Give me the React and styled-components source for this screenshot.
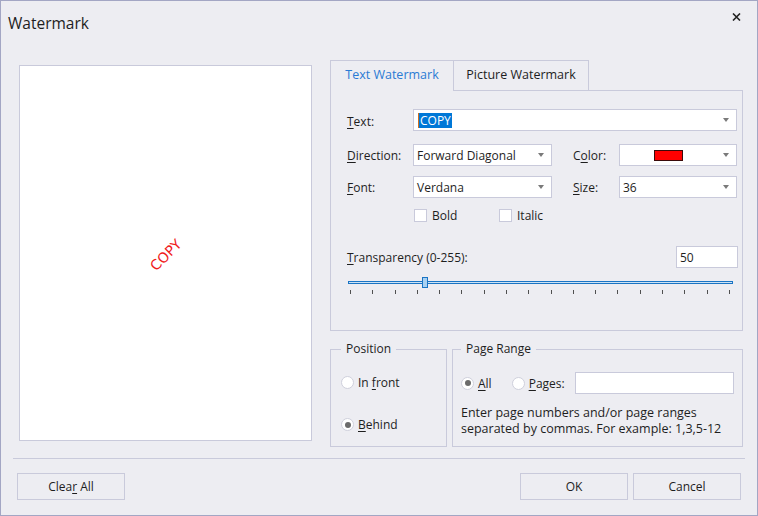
import React from 'react';
import styled, { createGlobalStyle } from 'styled-components';

const GlobalStyle = createGlobalStyle`
  html, body {
    margin: 0;
    padding: 0;
    background: #ededf2;
  }
  * { box-sizing: border-box; }
`;

const LINE = '#c9cadb';
const TEXT = '#1e1e1e';

const Window = styled.div`
  width: 758px;
  height: 516px;
  border: 1px solid #a3a6c4;
  background: #ededf2;
  display: flex;
  flex-direction: column;
  font-family: "Open Sans", "Noto Sans", sans-serif;
  font-size: 12px;
  color: ${TEXT};
`;

const TitleBar = styled.div`
  height: 44px;
  display: flex;
  justify-content: space-between;
  padding: 0 16px 0 7px;
`;

const Title = styled.div`
  align-self: center;
  font-size: 15.5px;
  margin-top: -1px;
`;

const CloseButton = styled.div`
  margin-top: 11px;
  width: 10px;
  height: 10px;
  display: flex;
  align-items: center;
  justify-content: center;
`;

const Main = styled.div`
  display: flex;
  gap: 18px;
  padding: 15px 0 0 18px;
`;

const Preview = styled.div`
  width: 293px;
  height: 376px;
  margin-top: 5px;
  background: #fff;
  border: 1px solid ${LINE};
  display: flex;
  align-items: center;
  justify-content: center;
`;

const PreviewText = styled.span`
  font-family: "DejaVu Sans", Verdana, sans-serif;
  font-size: 14px;
  color: #f01c1c;
  transform: rotate(-45deg);
  margin-top: 4px;
`;

const RightColumn = styled.div`
  width: 413px;
  display: flex;
  flex-direction: column;
`;

const TabStrip = styled.div`
  display: flex;
  height: 30px;
`;

const Tab = styled.div`
  height: ${p => (p.$active ? 31 : 30)}px;
  margin-bottom: ${p => (p.$active ? -1 : 0)}px;
  position: relative;
  z-index: ${p => (p.$active ? 1 : 0)};
  width: ${p => p.$width}px;
  background: #ededf2;
  border: 1px solid ${LINE};
  border-bottom: none;
  border-left: ${p => (p.$active ? `1px solid ${LINE}` : 'none')};
  color: ${p => (p.$active ? '#2b7bd4' : TEXT)};
  font-size: 12.5px;
  display: flex;
  align-items: center;
  justify-content: center;
  padding-bottom: ${p => (p.$active ? 3 : 2)}px;
`;

const TabPanel = styled.div`
  height: 241px;
  border: 1px solid ${LINE};
  padding: 18px 4px 0 16px;
`;

const Row = styled.div`
  display: flex;
  align-items: center;
  justify-content: ${p => (p.$spread ? 'space-between' : 'flex-start')};
  margin-top: ${p => p.$mt || 0}px;
  height: ${p => p.$h || 22}px;
`;

const Label = styled.div`
  width: ${p => p.$w}px;
  flex: none;
  padding-top: ${p => p.$drop || 0}px;
`;

const U = styled.span`
  text-decoration: underline;
  text-underline-offset: 2px;
`;

const Field = styled.div`
  position: relative;
  width: ${p => p.$w}px;
  height: 22px;
  background: #fff;
  border: 1px solid ${LINE};
  display: flex;
  align-items: center;
  padding-left: ${p => p.$pl || 3}px;
  margin-left: ${p => p.$ml || 0}px;
  flex: none;
`;

const Arrow = styled.span`
  position: absolute;
  right: 7px;
  top: 8px;
  width: 0;
  height: 0;
  border-left: 3.5px solid transparent;
  border-right: 3.5px solid transparent;
  border-top: 4px solid #7a7a7a;
`;

const Selected = styled.span`
  background: #0078d7;
  color: #fff;
  padding: 0 1px;
  line-height: 15px;
  border-left: 1px solid #d07020;
`;

const Swatch = styled.span`
  width: 29px;
  height: 11px;
  margin-left: 31px;
  margin-top: 1px;
  background: #ff0000;
  border: 1px solid #3a0a0a;
`;

const Spacer = styled.div`
  width: ${p => p.$w}px;
  flex: none;
`;

const CheckItem = styled.label`
  display: flex;
  align-items: center;
  gap: 5px;
  width: ${p => p.$w}px;
`;

const CheckBox = styled.span`
  width: 13px;
  height: 13px;
  background: #fff;
  border: 1px solid ${LINE};
`;

const SliderWrap = styled.div`
  position: relative;
  margin-top: 9px;
  margin-left: 1px;
  width: 385px;
  height: 18px;
`;

const Track = styled.div`
  position: absolute;
  left: 0;
  right: 0;
  top: 4px;
  height: 3px;
  border: 1px solid #1a74c4;
  background: #cfe4f6;
`;

const Thumb = styled.div`
  position: absolute;
  top: 0;
  width: 6px;
  height: 11px;
  background: #a9d1f2;
  border: 1px solid #1a74c4;
`;

const Ticks = styled.div`
  position: absolute;
  left: 2px;
  right: 3px;
  top: 13px;
  display: flex;
  justify-content: space-between;
`;

const Tick = styled.span`
  width: 1px;
  height: 4px;
  background: #505050;
`;

const Groups = styled.div`
  display: flex;
  gap: 5px;
  margin-top: 11px;
`;

const Group = styled.fieldset`
  margin: 0;
  padding: 0;
  min-inline-size: 0;
  width: ${p => p.$w}px;
  height: 105px;
  border: 1px solid ${LINE};
  display: flex;
  flex-direction: column;
`;

const Legend = styled.legend`
  margin-left: ${p => p.$indent}px;
  padding: 0 5px;
  line-height: 14px;
  font-size: 12px;
`;

const RadioItem = styled.label`
  display: flex;
  align-items: center;
  gap: 4px;
`;

const RadioCircle = styled.span`
  width: 13px;
  height: 13px;
  border-radius: 50%;
  background: #fff;
  border: 1px solid #cfd0dc;
  display: flex;
  align-items: center;
  justify-content: center;
  &::after {
    content: '';
    width: 6px;
    height: 6px;
    border-radius: 50%;
    background: ${p => (p.$checked ? '#6b6b6b' : 'transparent')};
  }
`;

const PositionBody = styled.div`
  display: flex;
  flex-direction: column;
  gap: 25px;
  padding: 18px 0 0 10px;
`;

const RangeBody = styled.div`
  display: flex;
  flex-direction: column;
  padding: 16px 0 0 8px;
`;

const RangeRow = styled.div`
  display: flex;
  align-items: center;
  gap: 20px;
`;

const Help = styled.div`
  margin-top: 11px;
  line-height: 16px;
  font-size: 12.5px;
`;

const Separator = styled.div`
  height: 1px;
  background: ${LINE};
  margin: 11px 12px 0;
`;

const Footer = styled.div`
  display: flex;
  align-items: center;
  padding: 14px 16px 0 16px;
  gap: 5px;
`;

const Button = styled.div`
  width: 108px;
  height: 27px;
  border: 1px solid ${LINE};
  display: flex;
  align-items: center;
  justify-content: center;
  margin-left: ${p => (p.$push ? 'auto' : '0')};
`;

const sliderValue = 50;

const Radio = ({ checked, children }) => (
  <RadioItem>
    <RadioCircle $checked={checked} />
    <span>{children}</span>
  </RadioItem>
);

const App = () => {
  const thumbLeft = Math.round(3 + (sliderValue / 255) * 378) - 3;
  return (
    <>
      <GlobalStyle />
      <Window>
        <TitleBar>
          <Title>Watermark</Title>
          <CloseButton>
            <svg width="9" height="8" viewBox="0 0 9 8">
              <path d="M1 0.5 L8 7.5 M8 0.5 L1 7.5" stroke="#222" strokeWidth="1.6" />
            </svg>
          </CloseButton>
        </TitleBar>

        <Main>
          <Preview>
            <PreviewText>COPY</PreviewText>
          </Preview>

          <RightColumn>
            <TabStrip>
              <Tab $active $width={124}>Text Watermark</Tab>
              <Tab $width={135}>Picture Watermark</Tab>
            </TabStrip>
            <TabPanel>
              <Row>
                <Label $w={66} $drop={3}><U>T</U>ext:</Label>
                <Field $w={324} $pl={4}>
                  <Selected>COPY</Selected>
                  <Arrow />
                </Field>
              </Row>
              <Row $mt={13}>
                <Label $w={66}><U>D</U>irection:</Label>
                <Field $w={139}>Forward Diagonal<Arrow /></Field>
                <Spacer $w={21} />
                <Label $w={46}>C<U>o</U>lor:</Label>
                <Field $w={118}>
                  <Swatch />
                  <Arrow />
                </Field>
              </Row>
              <Row $mt={10}>
                <Label $w={66}><U>F</U>ont:</Label>
                <Field $w={139}>Verdana<Arrow /></Field>
                <Spacer $w={21} />
                <Label $w={46}><U>S</U>ize:</Label>
                <Field $w={118}>36<Arrow /></Field>
              </Row>
              <Row $mt={10} $h={14}>
                <Spacer $w={67} />
                <CheckItem $w={85}><CheckBox />Bold</CheckItem>
                <CheckItem $w={80}><CheckBox />Italic</CheckItem>
              </Row>
              <Row $mt={24} $spread>
                <Label $w={200}><U>T</U>ransparency (0-255):</Label>
                <Field $w={62}>50</Field>
              </Row>
              <SliderWrap>
                <Track />
                <Thumb style={{ left: thumbLeft }} />
                <Ticks>
                  {Array.from({ length: 18 }).map((_, i) => <Tick key={i} />)}
                </Ticks>
              </SliderWrap>
            </TabPanel>

            <Groups>
              <Group $w={117}>
                <Legend $indent={10}>Position</Legend>
                <PositionBody>
                  <Radio>In <U>f</U>ront</Radio>
                  <Radio checked><U>B</U>ehind</Radio>
                </PositionBody>
              </Group>
              <Group $w={291}>
                <Legend $indent={8}>Page Range</Legend>
                <RangeBody>
                  <RangeRow>
                    <Radio checked><U>A</U>ll</Radio>
                    <Radio><U>P</U>ages:</Radio>
                    <Field $w={159} $ml={-10} />
                  </RangeRow>
                  <Help>
                    Enter page numbers and/or page ranges<br />
                    separated by commas. For example: 1,3,5-12
                  </Help>
                </RangeBody>
              </Group>
            </Groups>
          </RightColumn>
        </Main>

        <Separator />
        <Footer>
          <Button><span>Clea<U>r</U> All</span></Button>
          <Button $push>OK</Button>
          <Button>Cancel</Button>
        </Footer>
      </Window>
    </>
  );
};

export default App;
